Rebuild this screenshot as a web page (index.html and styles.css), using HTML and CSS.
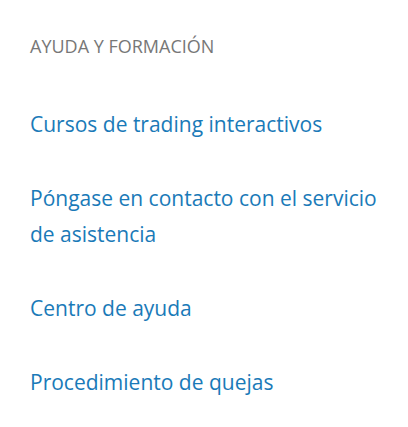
FILE: index.html
```html
<!DOCTYPE html>
<html lang="es">
<head>
<meta charset="utf-8">
<link rel="stylesheet" href="styles.css">
</head>
<body>
<nav class="footer-col">
  <h3 class="col-title">AYUDA Y FORMACIÓN</h3>
  <ul class="links">
    <li><a href="#">Cursos de trading interactivos</a></li>
    <li><a href="#">Póngase en contacto con el servicio de asistencia</a></li>
    <li><a href="#">Centro de ayuda</a></li>
    <li><a href="#">Procedimiento de quejas</a></li>
  </ul>
</nav>
</body>
</html>
```
FILE: styles.css
```css
html, body {
  margin: 0;
  padding: 0;
  background: #ffffff;
}
.footer-col {
  padding: 34px 20px 0 30px;
  font-family: "Open Sans", "Noto Sans", sans-serif;
}
.col-title {
  margin: 0;
  font-size: 18px;
  line-height: 24px;
  font-weight: 400;
  color: #777777;
}
.links {
  list-style: none;
  margin: 48px 0 0;
  padding: 0;
  display: flex;
  flex-direction: column;
  gap: 38px;
}
.links li {
  font-size: 21px;
  line-height: 36px;
}
.links a {
  color: #1a7ab8;
  text-decoration: none;
}
```
